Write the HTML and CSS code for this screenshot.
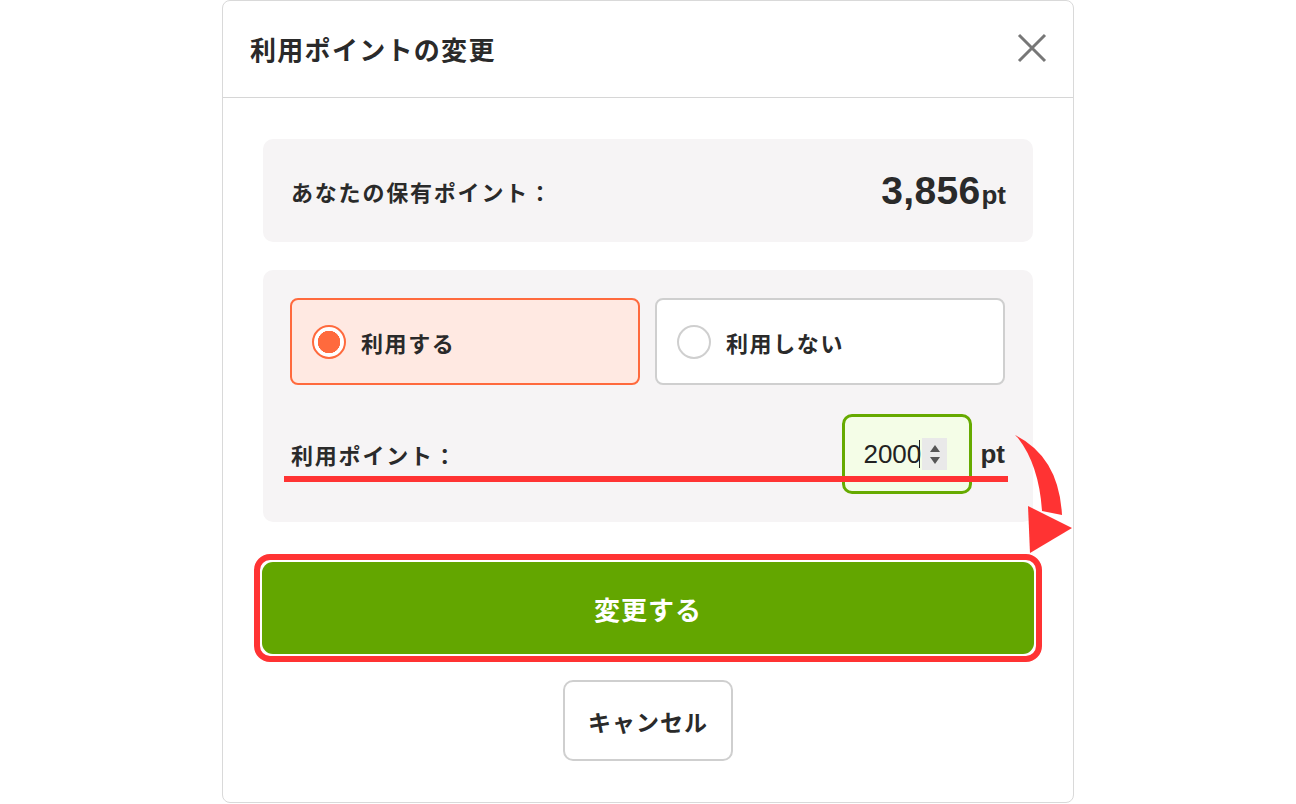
FILE: index.html
```html
<!DOCTYPE html>
<html lang="ja">
<head>
<meta charset="utf-8">
<link rel="stylesheet" href="styles.css">
</head>
<body>
<div class="dialog">
  <div class="header">
    <div class="title">利用ポイントの変更</div>
    <svg class="close" width="30" height="30" viewBox="0 0 30 30"><path d="M2 2 L28 28 M28 2 L2 28" stroke="#777" stroke-width="3" fill="none"/></svg>
  </div>
  <div class="content">
    <div class="owned">
      <span class="owned-label">あなたの保有ポイント：</span>
      <span class="owned-value"><span class="num">3,856</span><span class="unit">pt</span></span>
    </div>
    <div class="use-box">
      <div class="radios">
        <div class="radio active"><span class="circle"></span><span class="radio-text">利用する</span></div>
        <div class="radio"><span class="circle"></span><span class="radio-text">利用しない</span></div>
      </div>
      <div class="input-row">
        <span class="input-label">利用ポイント：</span>
        <div class="input-wrap">
          <div class="input-box">
            <span class="value">2000</span><span class="caret"></span>
            <span class="spinner"><span class="up"></span><span class="down"></span></span>
          </div>
          <span class="pt">pt</span>
        </div>
        <div class="underline"></div>
        <svg class="arrow" width="70" height="130" viewBox="0 0 70 130">
          <path d="M0 0 Q44 22 47 80 L27 76 Q24 30 3 3 Z" fill="#ff3333"/>
          <polygon points="13,71 57,93 15,118" fill="#ff3333"/>
        </svg>
      </div>
    </div>
    <div class="submit-frame">
      <div class="submit">変更する</div>
    </div>
    <div class="cancel-row">
      <div class="cancel">キャンセル</div>
    </div>
  </div>
</div>
</body>
</html>
```

FILE: styles.css
```css
* { box-sizing: border-box; }
html, body { margin: 0; padding: 0; background: #fff; }
body {
  font-family: "Noto Sans CJK JP", "Noto Sans", sans-serif;
  color: #2a2a2a;
  width: 1296px;
  height: 804px;
  overflow: hidden;
}
.dialog {
  width: 852px;
  height: 803px;
  margin: 0 auto;
  border: 1px solid #d9d9d9;
  border-radius: 8px;
  background: #fff;
}
.header {
  height: 97px;
  border-bottom: 1px solid #d6d6d6;
  display: flex;
  align-items: center;
  justify-content: space-between;
  padding: 0 26px 2px 27px;
}
.title {
  font-size: 26px;
  font-weight: 700;
  letter-spacing: 1.3px;
  color: #2a2a2a;
}
.close { display: block; }
.content {
  padding: 41px 40px 0 40px;
}
.owned {
  height: 103px;
  background: #f6f4f5;
  border-radius: 10px;
  display: flex;
  align-items: center;
  justify-content: space-between;
  padding: 0 27px 0 28px;
}
.owned-label {
  font-size: 22px;
  font-weight: 700;
  letter-spacing: 1.8px;
}
.owned-value {
  font-family: "Liberation Sans", Arial, sans-serif;
  font-weight: 700;
  display: flex;
  align-items: baseline;
}
.owned-value .num { font-size: 39px; letter-spacing: 0.3px; }
.owned-value .unit { font-size: 26px; margin-left: 1px; }
.use-box {
  margin-top: 28px;
  background: #f6f4f5;
  border-radius: 10px;
  padding: 28px 28px 28px 27px;
}
.radios {
  display: grid;
  grid-template-columns: 1fr 1fr;
  gap: 15px;
}
.radio {
  height: 87px;
  border: 2px solid #cfcfcf;
  border-radius: 8px;
  background: #fff;
  display: flex;
  align-items: center;
  padding-left: 20px;
  gap: 15px;
}
.radio.active {
  border-color: #ff6a3d;
  background: #ffe9e2;
}
.circle {
  width: 34px;
  height: 34px;
  border-radius: 50%;
  border: 2px solid #cfcfcf;
  background: #fff;
  flex: none;
}
.radio.active .circle {
  border: 2px solid #ff6a3d;
  background: radial-gradient(circle, #ff6a3d 0 11px, #fff 11.5px);
}
.radio-text {
  font-size: 22px;
  font-weight: 700;
  letter-spacing: 1.6px;
}
.input-row {
  position: relative;
  margin-top: 29px;
  height: 80px;
  display: flex;
  align-items: center;
  justify-content: space-between;
  padding-left: 1px;
}
.input-label {
  font-size: 22px;
  font-weight: 700;
  letter-spacing: 1.8px;
}
.input-wrap {
  display: flex;
  align-items: center;
  gap: 8px;
}
.input-box {
  width: 130px;
  height: 80px;
  border: 3px solid #66aa00;
  border-radius: 10px;
  background: #f4fde7;
  display: flex;
  align-items: center;
  padding-left: 18px;
}
.value {
  font-family: "Liberation Sans", Arial, sans-serif;
  font-size: 26px;
  color: #222;
}
.caret {
  width: 1px;
  height: 28px;
  background: #222;
  margin-left: -2px;
}
.spinner {
  width: 25px;
  height: 32px;
  background: #e9e9e9;
  margin-left: 2px;
  display: flex;
  flex-direction: column;
  align-items: center;
  justify-content: center;
  gap: 5px;
}
.spinner .up, .spinner .down {
  width: 0;
  height: 0;
  border-left: 5px solid transparent;
  border-right: 5px solid transparent;
}
.spinner .up { border-bottom: 7px solid #555; }
.spinner .down { border-top: 7px solid #555; }
.pt {
  font-family: "Liberation Sans", Arial, sans-serif;
  font-size: 26px;
  font-weight: 700;
  margin-right: 0;
}
.underline {
  position: absolute;
  left: -6px;
  right: -3px;
  top: 62px;
  height: 6px;
  background: #ff3333;
}
.arrow {
  position: absolute;
  left: 725px;
  top: 21px;
  overflow: visible;
}
.submit-frame {
  margin: 32px -9px 0 -9px;
  border: 6px solid #ff3333;
  border-radius: 16px;
  padding: 2px;
  background: #fff;
}
.submit {
  height: 92px;
  background: #63a600;
  border-radius: 11px;
  display: flex;
  align-items: center;
  justify-content: center;
  color: #fff;
  font-size: 26px;
  font-weight: 700;
  letter-spacing: 1px;
}
.cancel-row {
  display: flex;
  justify-content: center;
  margin-top: 18px;
}
.cancel {
  width: 170px;
  height: 81px;
  border: 2px solid #cfcfcf;
  border-radius: 10px;
  display: flex;
  align-items: center;
  justify-content: center;
  font-size: 23px;
  font-weight: 700;
  letter-spacing: 1px;
}
```
